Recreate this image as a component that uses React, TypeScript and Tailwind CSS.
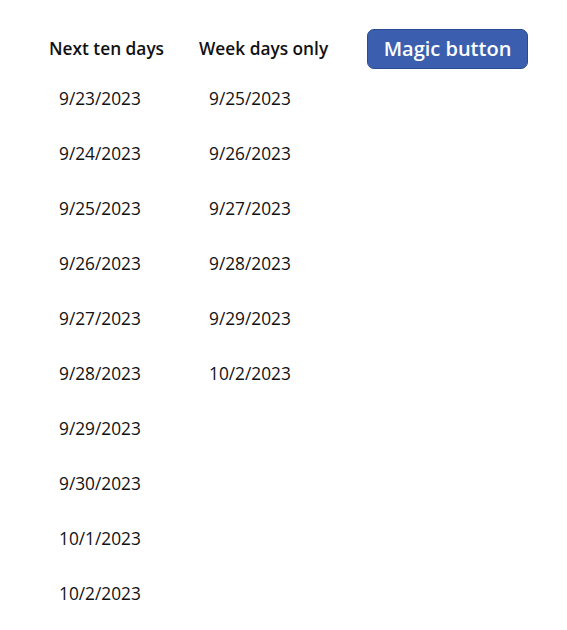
import React from "react";

const all = ["9/23/2023","9/24/2023","9/25/2023","9/26/2023","9/27/2023","9/28/2023","9/29/2023","9/30/2023","10/1/2023","10/2/2023"];
const week = ["9/25/2023","9/26/2023","9/27/2023","9/28/2023","9/29/2023","10/2/2023"];

function Col({ title, items, width }: { title: string; items: string[]; width: string }) {
  return (
    <div className={`flex flex-col ${width}`}>
      <div className="h-[40px] flex items-center text-[17.3px] font-semibold text-[#111]">{title}</div>
      <div className="flex flex-col mt-[2px]">
        {items.map((d, i) => (
          <div key={i} className="h-[55px] flex items-center pl-[10px] text-[17.3px] text-[#111]">{d}</div>
        ))}
      </div>
    </div>
  );
}

export default function App() {
  return (
    <div className="w-[567px] h-[630px] bg-white flex pt-[29px] pl-[49px]" style={{ fontFamily: '"Open Sans", sans-serif' }}>
      <Col title="Next ten days" items={all} width="w-[150px]" />
      <Col title="Week days only" items={week} width="w-[168px]" />
      <div>
        <button className="w-[161px] h-[40px] rounded-[7px] bg-[#3b5fae] border border-[#2a4a92] text-white text-[20px] font-semibold">Magic button</button>
      </div>
    </div>
  );
}
